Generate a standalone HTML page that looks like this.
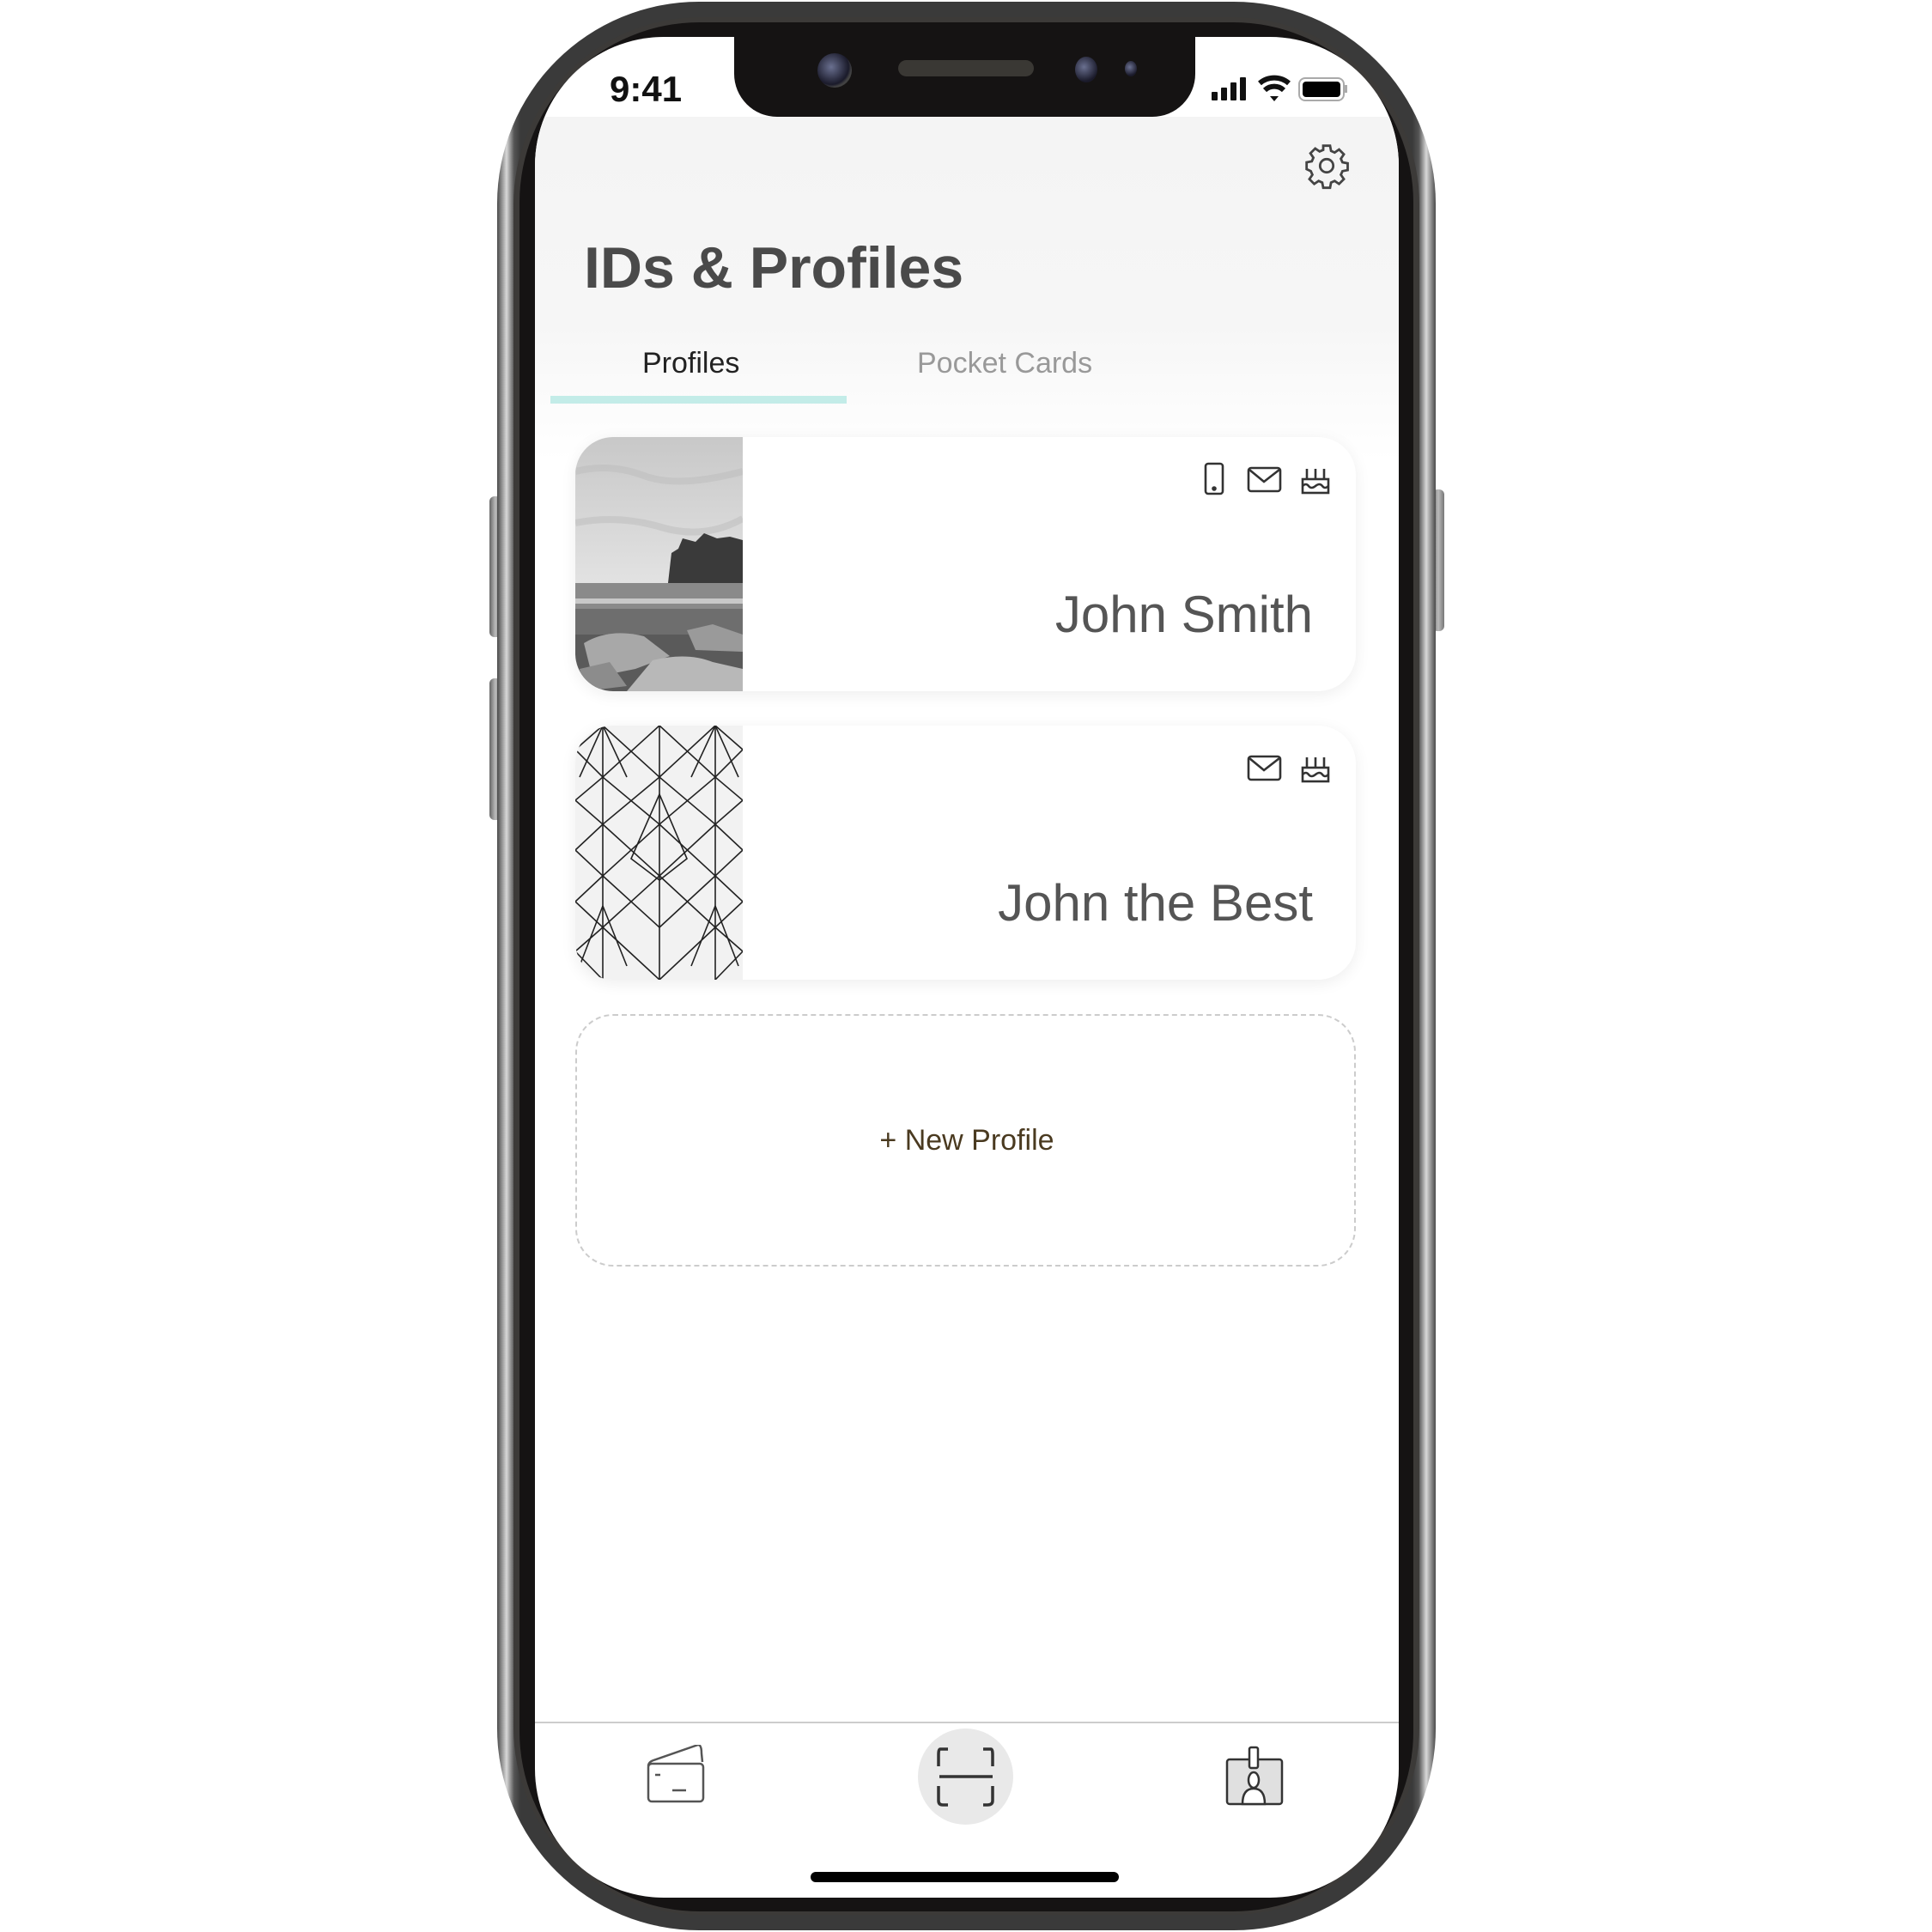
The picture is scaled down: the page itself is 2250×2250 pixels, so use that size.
<!DOCTYPE html>
<html><head><meta charset="utf-8"><style>
*{margin:0;padding:0;box-sizing:border-box}
body{width:2250px;height:2250px;background:#fff;position:relative;overflow:hidden;font-family:"Liberation Sans",sans-serif}
.abs{position:absolute}
.btn{position:absolute;background:linear-gradient(90deg,#666,#bbb 50%,#777);border-radius:6px}
#outer{left:579px;top:2px;width:1093px;height:2246px;border-radius:235px;background:linear-gradient(90deg,#4a4a4a,#d8d8d8 1%,#555 1.8%,#3a3a3a 2.5%,#3a3a3a 97.5%,#555 98.2%,#d8d8d8 99%,#4a4a4a);}
#gray{left:598px;top:20px;width:1055px;height:2210px;border-radius:218px;background:#3c3a38}
#bezel{left:605px;top:26px;width:1041px;height:2200px;border-radius:210px;background:#151313}
#screen{left:623px;top:43px;width:1006px;height:2167px;border-radius:150px;background:#fff;overflow:hidden}
#hdr{position:absolute;left:0;top:93px;width:100%;height:400px;background:linear-gradient(180deg,#f4f4f4,#f6f6f6 60%,#fff)}
#notch{left:855px;top:30px;width:537px;height:106px;background:#151313;border-radius:0 0 50px 50px}
.card{position:absolute;left:47px;width:909px;height:296px;background:#fff;border-radius:44px;box-shadow:0 4px 18px rgba(0,0,0,.07);overflow:hidden}
.name{position:absolute;right:50px;font-size:60px;color:#555;letter-spacing:0px}
</style></head><body>
<div class="btn" style="left:570px;top:578px;width:14px;height:164px"></div>
<div class="btn" style="left:570px;top:790px;width:14px;height:165px"></div>
<div class="btn" style="left:1668px;top:570px;width:14px;height:165px"></div>
<div id="outer" class="abs"></div>
<div id="gray" class="abs"></div>
<div id="bezel" class="abs"></div>
<div id="screen" class="abs">
  <div id="hdr"></div>
  <div class="abs" style="left:87px;top:37px;font-size:42px;color:#111;font-weight:bold">9:41</div>
  <svg class="abs" style="left:788px;top:42px" width="160" height="36" viewBox="0 0 160 36">
    <rect x="0" y="22" width="7" height="10" rx="1" fill="#111"/><rect x="11" y="17" width="7" height="15" rx="1" fill="#111"/><rect x="22" y="11" width="7" height="21" rx="1" fill="#111"/><rect x="33" y="5" width="7" height="27" rx="1" fill="#111"/>
    <path d="M56 12 A26 26 0 0 1 90 12" stroke="#111" stroke-width="6" fill="none"/><path d="M62 20 A16 16 0 0 1 84 20" stroke="#111" stroke-width="6" fill="none"/><path d="M68 27 L73 33 L78 27 Z" fill="#111"/>
    <rect x="102" y="6" width="52" height="26" rx="7" fill="none" stroke="#aaa" stroke-width="2"/><rect x="106" y="10" width="44" height="18" rx="4" fill="#000"/><rect x="155" y="14" width="3" height="9" fill="#aaa"/>
  </svg>
  <svg class="abs" style="left:894px;top:122px" width="56" height="56" viewBox="0 0 24 24" fill="none" stroke="#444" stroke-width="1.2">
    <path d="M10.3 2h3.4l.5 2.6 1.8.8 2.2-1.5 2.4 2.4-1.5 2.2.8 1.8 2.6.5v3.4l-2.6.5-.8 1.8 1.5 2.2-2.4 2.4-2.2-1.5-1.8.8-.5 2.6h-3.4l-.5-2.6-1.8-.8-2.2 1.5-2.4-2.4 1.5-2.2-.8-1.8L2 13.7v-3.4l2.6-.5.8-1.8-1.5-2.2 2.4-2.4 2.2 1.5 1.8-.8z"/><circle cx="12" cy="12" r="3.3"/>
  </svg>
  <div class="abs" style="left:57px;top:230px;font-size:68px;font-weight:bold;color:#4a4a4a">IDs &amp; Profiles</div>
  <div class="abs" style="left:125px;top:361px;font-size:34px;color:#222">Profiles</div>
  <div class="abs" style="left:445px;top:361px;font-size:34px;color:#999">Pocket Cards</div>
  <div class="abs" style="left:18px;top:418px;width:345px;height:9px;background:#c3ece8"></div>

  <div class="card" style="top:466px">
    <svg class="abs" style="left:0;top:0" width="195" height="296" viewBox="0 0 195 296">
      <defs><linearGradient id="sky" x1="0" y1="0" x2="0" y2="1"><stop offset="0" stop-color="#c8c8c8"/><stop offset="1" stop-color="#e2e2e2"/></linearGradient></defs>
      <rect width="195" height="170" fill="url(#sky)"/>
      <path d="M0 40 Q40 30 80 45 T195 40 M0 100 Q50 90 100 105 T195 95" stroke="#bbb" stroke-width="8" fill="none" opacity=".5"/>
      <path d="M108 170 L112 135 L120 130 L125 118 L140 122 L150 112 L165 118 L180 116 L195 120 L195 172 Z" fill="#3a3a3a"/>
      <rect y="170" width="195" height="30" fill="#8a8a8a"/>
      <rect y="188" width="195" height="6" fill="#c8c8c8"/>
      <rect y="200" width="195" height="30" fill="#6e6e6e"/>
      <rect y="230" width="195" height="66" fill="#5a5a5a"/>
      <path d="M10 240 Q40 222 80 232 L110 255 L70 270 L20 280 Z" fill="#a8a8a8"/>
      <path d="M90 260 Q130 250 160 262 L195 270 L195 296 L60 296 Z" fill="#b8b8b8"/>
      <path d="M130 225 L160 218 L195 230 L195 250 L140 248 Z" fill="#9a9a9a"/>
      <path d="M5 270 L40 262 L60 290 L10 296 Z" fill="#8c8c8c"/>
    </svg>
    <svg class="abs" style="left:732px;top:29px" width="160" height="40" viewBox="0 0 160 40" fill="none" stroke="#333" stroke-width="2.6">
      <rect x="2" y="2" width="20" height="35" rx="3"/><circle cx="12" cy="31" r="1.5" fill="#333"/>
      <rect x="52" y="7" width="37" height="27" rx="3"/><path d="M53 9 L70 23 L88 9"/>
      <rect x="115" y="20" width="30" height="16"/><path d="M115 28 q4 -4 7 0 t8 0 t8 0 t7 0 M120 20v-12 M130 20v-12 M140 20v-12"/>
    </svg>
    <div class="name" style="top:172px">John Smith</div>
  </div>

  <div class="card" style="top:802px">
    <svg class="abs" style="left:0;top:0" width="195" height="296" viewBox="0 0 195 296">
      <rect width="195" height="296" fill="#f2f2f2"/>
      <g stroke="#222" stroke-width="1.6" fill="none">
        <path d="M32 0V296 M98 0V296 M163 0V296"/>
        <path d="M0 28 L32 0 M32 0 L98 60 L163 0 L195 28 M0 28 L32 60 L98 0 L163 60 L195 28"/>
        <path d="M0 87 L32 60 L98 115 L163 60 L195 87 M0 145 L32 115 L98 175 L163 115 L195 145 M0 87 L32 115 L98 60 L163 115 L195 87"/>
        <path d="M0 145 L32 175 L98 115 M98 115 L163 175 L195 145 M0 205 L32 175 L98 235 L163 175 L195 205 M0 205 L32 235 L98 175 L163 235 L195 205"/>
        <path d="M0 263 L32 235 L98 296 M98 296 L163 235 L195 263 M0 263 L32 296 M163 296 L195 263"/>
        <path d="M98 80 L65 155 L98 180 L130 155 Z M32 0 L5 60 M32 0 L60 60 M163 0 L135 60 M163 0 L190 60 M32 210 L5 280 M32 210 L60 280 M163 210 L135 280 M163 210 L190 280"/>
      </g>
    </svg>
    <svg class="abs" style="left:732px;top:29px" width="160" height="40" viewBox="0 0 160 40" fill="none" stroke="#333" stroke-width="2.6">
      <rect x="52" y="7" width="37" height="27" rx="3"/><path d="M53 9 L70 23 L88 9"/>
      <rect x="115" y="20" width="30" height="16"/><path d="M115 28 q4 -4 7 0 t8 0 t8 0 t7 0 M120 20v-12 M130 20v-12 M140 20v-12"/>
    </svg>
    <div class="name" style="top:172px">John the Best</div>
  </div>

  <div class="abs" style="left:47px;top:1138px;width:909px;height:294px;border:2px dashed #ccc;border-radius:44px"></div>
  <div class="abs" style="left:0;top:1266px;width:1006px;text-align:center;font-size:34px;color:#4a3a20">+ New Profile</div>

  <div class="abs" style="left:0;top:1962px;width:100%;height:2px;background:#ccc"></div>
  <svg class="abs" style="left:130px;top:1989px" width="70" height="70" viewBox="0 0 70 70" fill="none" stroke="#555" stroke-width="2.5">
    <path d="M2 25 Q2 20 8 18 L60 0 Q64 0 64 10 L65 20"/><rect x="2" y="22" width="64" height="44" rx="4"/><path d="M10 35h6 M30 53h16"/>
  </svg>
  <div class="abs" style="left:446px;top:1970px;width:111px;height:112px;border-radius:50%;background:#e9e9e9"></div>
  <svg class="abs" style="left:467px;top:1992px" width="70" height="70" viewBox="0 0 70 70" fill="none" stroke="#333" stroke-width="3.5">
    <path d="M14 2 H5 Q3 2 3 8 V22 M55 2 H64 Q66 2 66 8 V22 M3 45 V62 Q3 67 8 67 H14 M66 45 V62 Q66 67 60 67 H55 M4 34 H66"/>
  </svg>
  <svg class="abs" style="left:802px;top:1990px" width="72" height="72" viewBox="0 0 72 72" stroke="#333" stroke-width="2.5">
    <rect x="4" y="16" width="64" height="52" rx="3" fill="#e0e0e0"/><rect x="30" y="2" width="10" height="24" rx="2" fill="#fff"/><ellipse cx="35" cy="40" rx="6" ry="9" fill="#fff"/><path d="M22 68 Q22 50 35 50 Q48 50 48 68 Z" fill="#fff"/>
  </svg>
  <div class="abs" style="left:321px;top:2137px;width:359px;height:12px;border-radius:6px;background:#000"></div>
</div>
<div id="notch" class="abs"></div>
<div class="abs" style="left:952px;top:62px;width:40px;height:40px;border-radius:50%;background:radial-gradient(circle at 40% 40%,#6a7090,#1a1a2a 60%,#444 70%,#222)"></div>
<div class="abs" style="left:1046px;top:70px;width:158px;height:19px;border-radius:10px;background:#3a3834"></div>
<div class="abs" style="left:1252px;top:66px;width:26px;height:30px;border-radius:50%;background:radial-gradient(circle at 40% 40%,#6a7090,#1a1a2a 70%)"></div>
<div class="abs" style="left:1310px;top:71px;width:14px;height:18px;border-radius:50%;background:radial-gradient(circle at 40% 40%,#6a7090,#1a1a2a 70%)"></div>
</body></html>
